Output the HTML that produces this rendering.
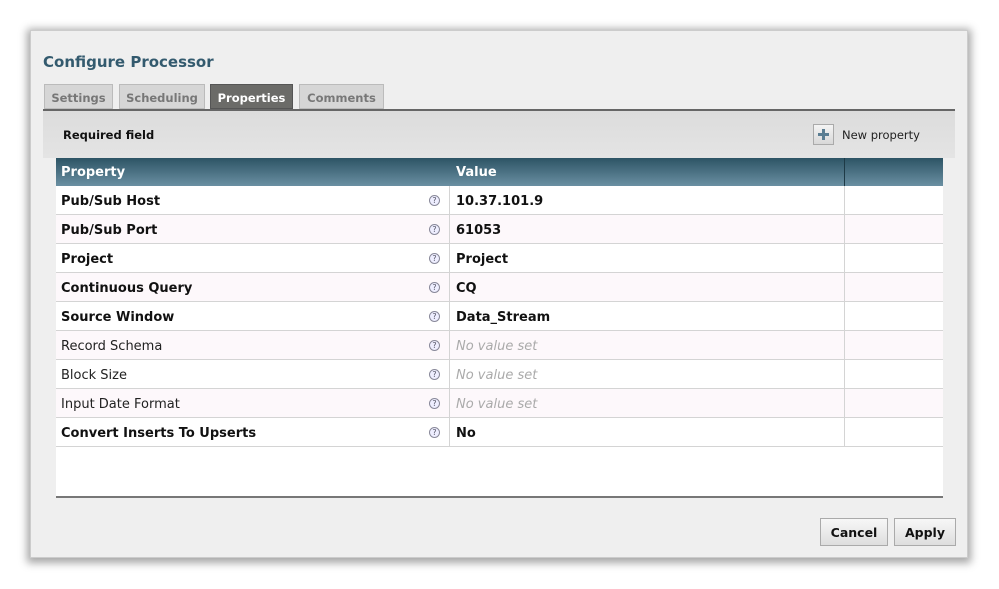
<!DOCTYPE html>
<html><head><style>
body{margin:0;width:999px;height:589px;background:#fff;font-family:"DejaVu Sans","Liberation Sans",sans-serif;position:relative;overflow:hidden}
.dlg{position:absolute;left:30px;top:30px;width:938px;height:528px;background:#efefef;box-shadow:0 2px 8px 3px rgba(0,0,0,.35);border:1px solid #ccc;box-sizing:border-box}
.title{position:absolute;left:43px;top:53px;font-size:15px;font-weight:bold;color:#335a6e}
.tab{position:absolute;top:84px;height:25px;background:#d6d6d6;border:1px solid #bbb;box-sizing:border-box;font-size:11.5px;font-weight:bold;color:#777;text-align:center;line-height:26px}
.tab.a{background:#6b6b68;color:#fff;border-color:#555}
.line{position:absolute;left:43px;top:109px;width:912px;height:2px;background:#666}
.band{position:absolute;left:43px;top:111px;width:912px;height:47px;background:linear-gradient(#dcdcdc,#e4e4e4)}
.req{position:absolute;left:63px;top:128px;font-size:11.5px;font-weight:bold;color:#111}
.np{position:absolute;left:813px;top:124px;width:21px;height:21px;background:linear-gradient(#f4f4f4,#d8d8d8);border:1px solid #aaa;box-sizing:border-box}
.np:before{content:"";position:absolute;left:4px;top:8px;width:11px;height:3px;background:#5a7d92}
.np:after{content:"";position:absolute;left:8px;top:4px;width:3px;height:11px;background:#5a7d92}
.npt{position:absolute;left:842px;top:128px;font-size:11.5px;color:#222}
.tbl{position:absolute;left:56px;top:158px;width:887px;height:340px;background:#fff;border-bottom:2px solid #777;box-sizing:border-box}
.hd{position:absolute;left:0;top:0;width:887px;height:28px;background:linear-gradient(#2d5465,#6a8fa2)}
.hd span{position:absolute;top:7px;color:#fff;font-weight:bold;font-size:13px}
.row{position:absolute;left:0;width:887px;height:29px;border-bottom:1px solid #d4d4d4;box-sizing:border-box;font-size:13px}
.p{position:absolute;left:5px;top:8px;color:#222}
.b .p,.b .v{font-weight:bold;color:#111}
.v{position:absolute;left:400px;top:8px}
.nv{color:#aaa;font-style:italic;font-weight:normal}
.q{position:absolute;left:373px;top:9px;width:11px;height:11px;border-radius:50%;border:1px solid #889;box-sizing:border-box;font-size:8px;line-height:9px;text-align:center;color:#556;background:#eef}
.c1{position:absolute;left:393px;top:0;width:1px;height:29px;background:#d4d4d4}
.c2{position:absolute;left:788px;top:0;width:1px;height:29px;background:#d4d4d4}
.btn{position:absolute;top:518px;height:28px;border:1px solid #aaa;box-sizing:border-box;background:linear-gradient(#f7f7f7,#dedede);font-size:12.5px;font-weight:bold;color:#111;text-align:center;line-height:28px}
</style></head><body>
<div class="dlg"></div>
<div class="title">Configure Processor</div>
<div class="tab" style="left:44px;width:69px">Settings</div>
<div class="tab" style="left:119px;width:86px">Scheduling</div>
<div class="tab a" style="left:210px;width:83px">Properties</div>
<div class="tab" style="left:299px;width:85px">Comments</div>
<div class="line"></div>
<div class="band"></div>
<div class="req">Required field</div>
<div class="np"></div><div class="npt">New property</div>
<div class="tbl">
<div class="hd"><span style="left:5px">Property</span><span style="left:400px">Value</span><div style="position:absolute;left:788px;top:0;width:1px;height:28px;background:#1e3a46"></div></div>
<div style="position:absolute;top:28px;left:0">
<div class="row b" style="top:0"><span class="p">Pub/Sub Host</span><span class="q">?</span><div class="c1"></div><span class="v">10.37.101.9</span><div class="c2"></div></div>
<div class="row b" style="top:29px;background:#fdf8fb"><span class="p">Pub/Sub Port</span><span class="q">?</span><div class="c1"></div><span class="v">61053</span><div class="c2"></div></div>
<div class="row b" style="top:58px"><span class="p">Project</span><span class="q">?</span><div class="c1"></div><span class="v">Project</span><div class="c2"></div></div>
<div class="row b" style="top:87px;background:#fdf8fb"><span class="p">Continuous Query</span><span class="q">?</span><div class="c1"></div><span class="v">CQ</span><div class="c2"></div></div>
<div class="row b" style="top:116px"><span class="p">Source Window</span><span class="q">?</span><div class="c1"></div><span class="v">Data_Stream</span><div class="c2"></div></div>
<div class="row" style="top:145px;background:#fdf8fb"><span class="p">Record Schema</span><span class="q">?</span><div class="c1"></div><span class="v nv">No value set</span><div class="c2"></div></div>
<div class="row" style="top:174px"><span class="p">Block Size</span><span class="q">?</span><div class="c1"></div><span class="v nv">No value set</span><div class="c2"></div></div>
<div class="row" style="top:203px;background:#fdf8fb"><span class="p">Input Date Format</span><span class="q">?</span><div class="c1"></div><span class="v nv">No value set</span><div class="c2"></div></div>
<div class="row b" style="top:232px"><span class="p">Convert Inserts To Upserts</span><span class="q">?</span><div class="c1"></div><span class="v">No</span><div class="c2"></div></div>
</div>
</div>
<div class="btn" style="left:820px;width:68px">Cancel</div>
<div class="btn" style="left:894px;width:62px">Apply</div>
</body></html>
